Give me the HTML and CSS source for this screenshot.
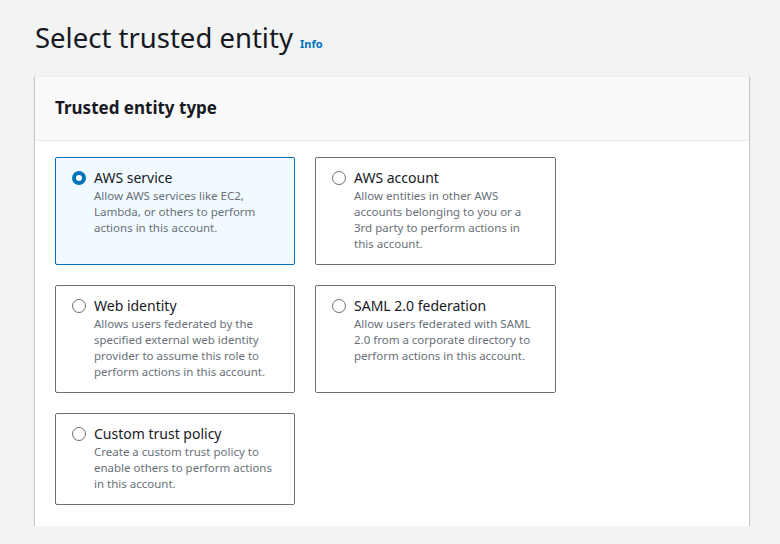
FILE: index.html
```html
<!DOCTYPE html>
<html>
<head>
<meta charset="utf-8">
<link rel="stylesheet" href="styles.css">
</head>
<body>
<div class="page">
  <h1 class="title">Select trusted entity <a class="info">Info</a></h1>
  <div class="container">
    <div class="header"><h2>Trusted entity type</h2></div>
    <div class="content">
      <div class="tiles">
        <label class="tile selected">
          <span class="radio checked"></span>
          <span class="text">
            <span class="label">AWS service</span>
            <span class="desc">Allow AWS services like EC2, Lambda, or others to perform actions in this account.</span>
          </span>
        </label>
        <label class="tile">
          <span class="radio"></span>
          <span class="text">
            <span class="label">AWS account</span>
            <span class="desc">Allow entities in other AWS accounts belonging to you or a 3rd party to perform actions in this account.</span>
          </span>
        </label>
        <label class="tile">
          <span class="radio"></span>
          <span class="text">
            <span class="label">Web identity</span>
            <span class="desc">Allows users federated by the specified external web identity provider to assume this role to perform actions in this account.</span>
          </span>
        </label>
        <label class="tile">
          <span class="radio"></span>
          <span class="text">
            <span class="label">SAML 2.0 federation</span>
            <span class="desc">Allow users federated with SAML 2.0 from a corporate directory to perform actions in this account.</span>
          </span>
        </label>
        <label class="tile">
          <span class="radio"></span>
          <span class="text">
            <span class="label">Custom trust policy</span>
            <span class="desc">Create a custom trust policy to enable others to perform actions in this account.</span>
          </span>
        </label>
      </div>
    </div>
  </div>
</div>
</body>
</html>
```
FILE: styles.css
```css
html, body {
  margin: 0;
  padding: 0;
  background: #f2f3f3;
  font-family: "Noto Sans", "Open Sans", Arial, sans-serif;
  color: #16191f;
}
.page {
  padding: 20px 31px 0 35px;
}
.title {
  margin: 0;
  font-size: 27.5px;
  line-height: 36px;
  font-weight: 400;
  color: #16191f;
  padding-bottom: 14px;
}
.info {
  font-size: 11px;
  font-weight: 700;
  color: #0073bb;
}
.container {
  background: #fff;
  border-top: 1px solid #eaeded;
  box-shadow: 0 1px 1px 0 rgba(0, 28, 36, 0.3), 1px 1px 1px 0 rgba(0, 28, 36, 0.15), -1px 1px 1px 0 rgba(0, 28, 36, 0.15);
}
.header {
  background: #fafafa;
  border-bottom: 1px solid #eaeded;
  padding: 20px 20px 21px;
}
.header h2 {
  margin: 0;
  font-size: 17px;
  line-height: 22px;
  font-weight: 700;
}
.content {
  padding: 16px 20px 21px;
}
.tiles {
  display: grid;
  grid-template-columns: 240px 241px;
  gap: 20px;
}
.tile {
  display: flex;
  gap: 8px;
  border: 1px solid #687078;
  border-radius: 2px;
  padding: 10px 16px 12px 16px;
  background: #fff;
}
.tile.selected {
  border-color: #0073bb;
  background: #f1faff;
}
.radio {
  flex: none;
  width: 14px;
  height: 14px;
  box-sizing: border-box;
  border: 1.5px solid #687078;
  border-radius: 50%;
  margin-top: 3px;
  background: #fff;
}
.radio.checked {
  border: 4px solid #0073bb;
}
.text {
  display: flex;
  flex-direction: column;
}
.label {
  font-size: 14px;
  line-height: 20px;
}
.desc {
  font-size: 11.5px;
  line-height: 16px;
  color: #687078;
}
```
